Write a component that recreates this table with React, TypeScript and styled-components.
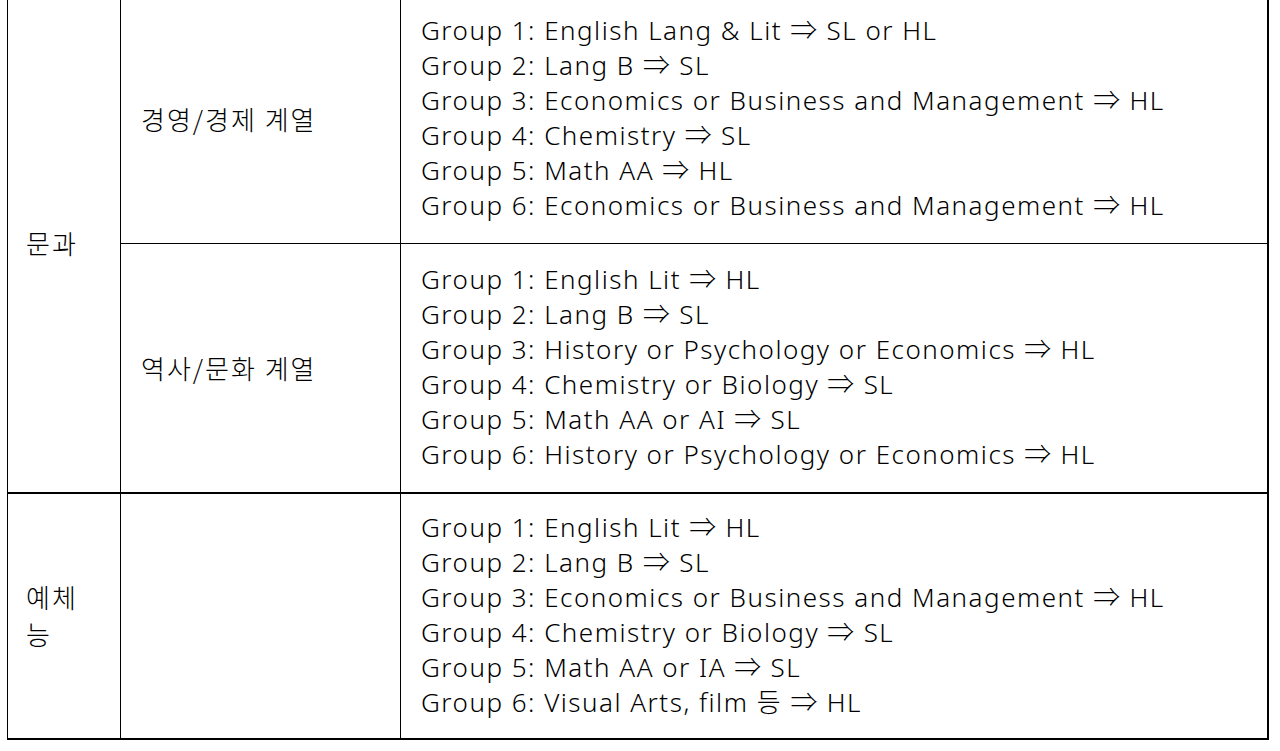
import React from "react";
import styled, { createGlobalStyle } from "styled-components";

const Global = createGlobalStyle`
  html, body { margin: 0; padding: 0; background: #fff; overflow: hidden; }
  body { font-family: "Noto Sans", "Noto Sans CJK KR", sans-serif; color: #000; }
`;

const Page = styled.div`
  width: 1280px;
  height: 751px;
  overflow: hidden;
`;

const Table = styled.table`
  border-collapse: collapse;
  margin: -6px 0 0 7px;
  width: 1262px;
  table-layout: fixed;
  font-size: 26px;
  line-height: 35px;
  font-weight: 300;
`;

const Cell = styled.td<{
  $bottom?: number;
  $right?: number;
  $pl?: number;
  $pr?: number;
  $pt?: number;
  $pb?: number;
}>`
  border-left: 1px solid #000;
  border-right: ${(p) => p.$right ?? 1}px solid #000;
  border-top: 1px solid #000;
  border-bottom: ${(p) => p.$bottom ?? 1}px solid #000;
  padding: ${(p) => p.$pt ?? 19}px ${(p) => p.$pr ?? 18}px ${(p) => p.$pb ?? 19}px
    ${(p) => p.$pl ?? 18}px;
  vertical-align: middle;
  white-space: normal;
`;

const Label = styled.span`
  font-family: "Noto Sans CJK KR", sans-serif;
  font-weight: 300;
  letter-spacing: 2px;
`;

const Line = styled.div`
  white-space: nowrap;
  letter-spacing: 1.5px;
  height: 35px;
`;

const Arrow = styled.span`
  font-size: 27px;
  letter-spacing: 1px;
  line-height: 1;
`;

type Row = { label?: string; lines: string[] };

const rows1: Row[] = [
  {
    label: "경영/경제 계열",
    lines: [
      "Group 1: English Lang & Lit ⇒ SL or HL",
      "Group 2: Lang B ⇒ SL",
      "Group 3: Economics or Business and Management ⇒ HL",
      "Group 4: Chemistry ⇒ SL",
      "Group 5: Math AA ⇒ HL",
      "Group 6: Economics or Business and Management ⇒ HL",
    ],
  },
  {
    label: "역사/문화 계열",
    lines: [
      "Group 1: English Lit ⇒ HL",
      "Group 2: Lang B ⇒ SL",
      "Group 3: History or Psychology or Economics ⇒ HL",
      "Group 4: Chemistry or Biology ⇒ SL",
      "Group 5: Math AA or AI ⇒ SL",
      "Group 6: History or Psychology or Economics ⇒ HL",
    ],
  },
];

const arts: string[] = [
  "Group 1: English Lit ⇒ HL",
  "Group 2: Lang B ⇒ SL",
  "Group 3: Economics or Business and Management ⇒ HL",
  "Group 4: Chemistry or Biology ⇒ SL",
  "Group 5: Math AA or IA ⇒ SL",
  "Group 6: Visual Arts, film 등 ⇒ HL",
];

const Lines = ({ lines }: { lines: string[] }) => (
  <>
    {lines.map((l) => {
      const [a, b] = l.split(" ⇒ ");
      return (
        <Line key={l}>
          {a} <Arrow>⇒</Arrow> {b}
        </Line>
      );
    })}
  </>
);

export default function App() {
  return (
    <Page>
      <Global />
      <Table>
        <colgroup>
          <col style={{ width: 113 }} />
          <col style={{ width: 280 }} />
          <col />
        </colgroup>
        <tbody>
          <tr>
            <Cell rowSpan={2} $bottom={2}>
              <Label>문과</Label>
            </Cell>
            <Cell $pl={20}>
              <Label>{rows1[0].label}</Label>
            </Cell>
            <Cell $right={2} $pl={20} $pt={18} $pb={20}>
              <Lines lines={rows1[0].lines} />
            </Cell>
          </tr>
          <tr>
            <Cell $pl={20} $bottom={2}>
              <Label>{rows1[1].label}</Label>
            </Cell>
            <Cell $right={2} $pl={20} $bottom={2} $pt={18} $pb={20}>
              <Lines lines={rows1[1].lines} />
            </Cell>
          </tr>
          <tr>
            <Cell $bottom={2} $pr={30} $pt={17} $pb={17}>
              <Label>예체능</Label>
            </Cell>
            <Cell $bottom={2} $pt={17} $pb={17} />
            <Cell $right={2} $pl={20} $bottom={2} $pt={16} $pb={18}>
              <Lines lines={arts} />
            </Cell>
          </tr>
        </tbody>
      </Table>
    </Page>
  );
}
